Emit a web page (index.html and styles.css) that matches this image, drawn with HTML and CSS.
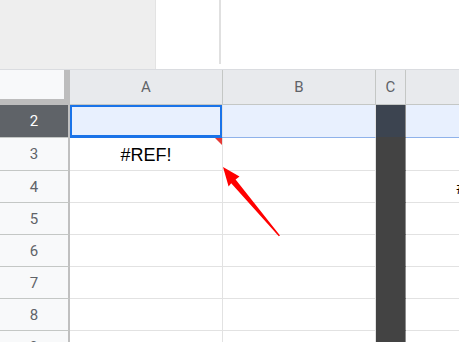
FILE: index.html
```html
<!DOCTYPE html>
<html lang="en">
<head>
  <meta charset="UTF-8" />
  <title>Sheet</title>
  <link rel="stylesheet" href="styles.css">
</head>
<body>
  <div class="top">
    <div class="top-left"></div>
    <div class="top-right"><div class="top-rule"></div></div>
  </div>

  <div class="sheet">
    <div class="row head">
      <div class="corner"></div>
      <div class="col-h col-a">A</div>
      <div class="col-h col-b">B</div>
      <div class="col-h col-c">C</div>
      <div class="col-h col-d"></div>
    </div>

    <div class="row r2 sel-row">
      <div class="num active">2</div>
      <div class="cell col-a selected"></div>
      <div class="cell col-b"></div>
      <div class="cell col-c hidden"></div>
      <div class="cell col-d"></div>
    </div>
    <div class="row r3">
      <div class="num">3</div>
      <div class="cell col-a error">#REF!</div>
      <div class="cell col-b"></div>
      <div class="cell col-c hidden"></div>
      <div class="cell col-d"></div>
    </div>
    <div class="row">
      <div class="num">4</div>
      <div class="cell col-a"></div>
      <div class="cell col-b"></div>
      <div class="cell col-c hidden"></div>
      <div class="cell col-d error">#REF!</div>
    </div>
    <div class="row">
      <div class="num">5</div>
      <div class="cell col-a"></div>
      <div class="cell col-b"></div>
      <div class="cell col-c hidden"></div>
      <div class="cell col-d"></div>
    </div>
    <div class="row">
      <div class="num">6</div>
      <div class="cell col-a"></div>
      <div class="cell col-b"></div>
      <div class="cell col-c hidden"></div>
      <div class="cell col-d"></div>
    </div>
    <div class="row">
      <div class="num">7</div>
      <div class="cell col-a"></div>
      <div class="cell col-b"></div>
      <div class="cell col-c hidden"></div>
      <div class="cell col-d"></div>
    </div>
    <div class="row">
      <div class="num">8</div>
      <div class="cell col-a"></div>
      <div class="cell col-b"></div>
      <div class="cell col-c hidden"></div>
      <div class="cell col-d"></div>
    </div>
    <div class="row">
      <div class="num">9</div>
      <div class="cell col-a"></div>
      <div class="cell col-b"></div>
      <div class="cell col-c hidden"></div>
      <div class="cell col-d"></div>
    </div>

    <!-- annotation arrow pointing at the error marker -->
    <svg class="arrow" width="80" height="90" viewBox="0 0 80 90">
      <polygon fill="#ff0000" points="3,0 19.5,9.5 15.6,12.4 60,68.5 58.8,69.3 11.2,16.2 8.6,19.6" />
    </svg>
  </div>
</body>
</html>
```

FILE: styles.css
```css
body {
  margin: 0;
  width: 459px;
  height: 342px;
  overflow: hidden;
  font-family: Roboto, Arial, sans-serif;
  background: #fff;
}

.top {
  display: flex;
  height: 69px;
  border-bottom: 1px solid #dadce0;
}

.top-left {
  width: 155px;
  background: #eeeeee;
  border-right: 1px solid #e3e3e3;
}

.top-right {
  flex: 1;
  padding-left: 63px;
}

.top-rule {
  width: 2px;
  height: 64px;
  background: #e0e0e0;
}

.sheet {
  position: relative;
}

.row {
  display: flex;
  height: 32px;
}

.row.r2,
.row.r3 {
  height: 33px;
}

.row.head {
  height: 35px;
}

.corner {
  width: 64px;
  height: 29px;
  flex: none;
  background: #f8f9fa;
  border-right: 6px solid #bdbdbd;
  border-bottom: 6px solid #bdbdbd;
}

.col-h {
  box-sizing: border-box;
  height: 35px;
  flex: none;
  display: flex;
  align-items: center;
  justify-content: center;
  background: #e8eaed;
  color: #5f6368;
  font-size: 15px;
  border-right: 1px solid #c4c7c5;
  border-bottom: 1px solid #c4c7c5;
}

.col-a { width: 153px; }
.col-b { width: 153px; }
.col-c { width: 30px; }
.col-d { width: 153px; }

.num {
  box-sizing: border-box;
  width: 70px;
  flex: none;
  display: flex;
  align-items: center;
  justify-content: center;
  background: #f8f9fa;
  color: #5f6368;
  font-size: 15px;
  border-right: 2px solid #c0c0c0;
  border-bottom: 1px solid #c4c7c5;
}

.num.active {
  background: #5f6368;
  color: #fff;
}

.cell {
  box-sizing: border-box;
  flex: none;
  position: relative;
  display: flex;
  align-items: center;
  justify-content: center;
  padding-top: 3px;
  border-right: 1px solid #e2e2e2;
  border-bottom: 1px solid #e2e2e2;
  font-family: "Liberation Sans", Arial, sans-serif;
  font-size: 18px;
  color: #000;
}

.sel-row .cell {
  background: #e8f0fe;
  border-bottom-color: #8fb2ea;
}

.cell.selected {
  box-shadow: inset 0 0 0 2px #1a73e8;
  border-bottom-color: #1a73e8;
}

.cell.hidden,
.sel-row .cell.hidden {
  background: #434343;
  border-right-color: #8e8e8e;
  border-bottom-color: #434343;
}

.sel-row .cell.hidden {
  background: #3c4450;
}

.cell.error::after {
  content: "";
  position: absolute;
  top: 0;
  right: 0;
  border-top: 7px solid #e53935;
  border-left: 7px solid transparent;
}

.arrow {
  position: absolute;
  left: 220px;
  top: 97px;
}
```
